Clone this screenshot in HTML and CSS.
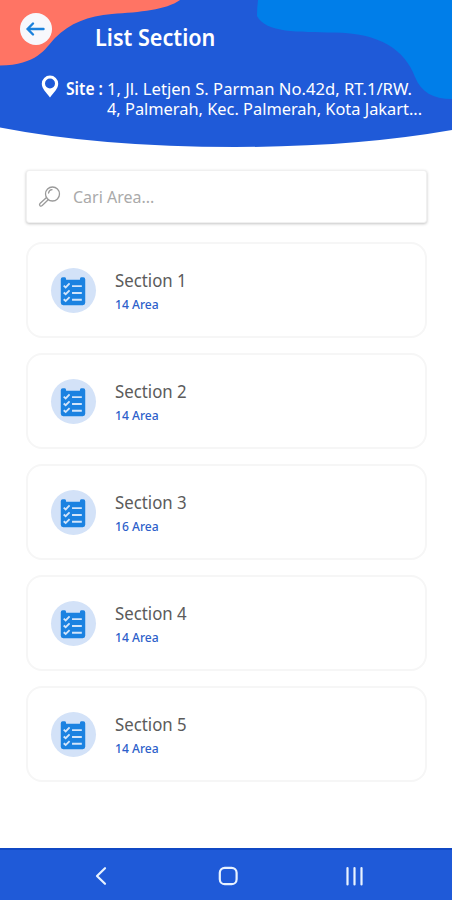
FILE: index.html
```html
<!DOCTYPE html>
<html lang="id">
<head>
<meta charset="utf-8">
<title>List Section</title>
<link rel="stylesheet" href="styles.css">
</head>
<body>
<svg class="defs" aria-hidden="true">
  <symbol id="checklist" viewBox="0 0 46 46">
    <path fill="#1b82e1" d="M10 11.500q0-2 2-2h2q1.500 0 1.500 2.500h14q0-2.500 1.500-2.500h2q2 0 2 2V35.500q0 2.500-2.500 2.500h-20Q10 38 10 35.500z"/>
    <path class="ticks" d="M13 18l2 1.800 4-4M13 25l2 1.800 4-4M13 32l2 1.800 4-4"/>
    <path class="rows" d="M21.500 18.500h10M21.500 25.500h10M21.500 32.500h10"/>
  </symbol>
</svg>
<div class="screen">
  <header class="header">
    <svg class="header-art" viewBox="0 0 452 150" aria-hidden="true">
      <path fill="#1f5ad8" d="M0 0H452V130Q355 147 235 147Q100 147 0 127.500z"/>
      <path fill="#ff7464" d="M0 0H180C166 10 140 12 112 14C88 16 70 23 55 38C45 49 37 65 0 65.500z"/>
      <path fill="#007ee9" d="M258 0H452V99C433 99 421 92 415 77C405 50 380 33 334 32.500C298 32 266 33 257 16Q257 8 258 0z"/>
    </svg>
    <div class="title-row">
      <button class="back" aria-label="Kembali">
        <svg width="32" height="32" viewBox="0 0 32 32"><path d="M23.500 16H7.500M13 10.500L7.500 16l5.500 5.500"/></svg>
      </button>
      <h1 class="title">List Section</h1>
    </div>
    <div class="site">
      <svg class="pin" width="18" height="24" viewBox="0 0 18 24"><path fill="#fff" fill-rule="evenodd" d="M9 .5A8.200 8.200 0 0 0 .8 8.700C.8 13.500 5 17 9 22.500C13 17 17.200 13.500 17.200 8.700A8.200 8.200 0 0 0 9 .5zM9 3.500A5 5 0 1 1 9 13.500A5 5 0 0 1 9 3.500z"/></svg>
      <span class="site-label">Site :</span>
      <p class="address"><span class="line-one">1, Jl. Letjen S. Parman No.42d, RT.1/RW.</span><span class="line-two">4, Palmerah, Kec. Palmerah, Kota Jakart...</span></p>
    </div>
  </header>
  <main class="content">
    <div class="search">
      <svg width="24" height="24" viewBox="0 0 24 24"><circle cx="14.500" cy="9" r="7"/><path d="M8.500 12.500l-6.500 6q-1 1.300 0 2.200 1 .8 2.200-.2l6.300-6M10.500 8q.8-3 3.500-3.300"/></svg>
      <span class="placeholder">Cari Area...</span>
    </div>
    <div class="card"><svg class="badge"><use href="#checklist"/></svg><div><h2>Section 1</h2><p>14 Area</p></div></div>
    <div class="card"><svg class="badge"><use href="#checklist"/></svg><div><h2>Section 2</h2><p>14 Area</p></div></div>
    <div class="card"><svg class="badge"><use href="#checklist"/></svg><div><h2>Section 3</h2><p>16 Area</p></div></div>
    <div class="card"><svg class="badge"><use href="#checklist"/></svg><div><h2>Section 4</h2><p>14 Area</p></div></div>
    <div class="card"><svg class="badge"><use href="#checklist"/></svg><div><h2>Section 5</h2><p>14 Area</p></div></div>
  </main>
  <nav class="navbar">
    <svg width="24" height="24" viewBox="0 0 24 24"><path d="M16 4.200L8 12l8 7.800"/></svg>
    <svg width="24" height="24" viewBox="0 0 24 24"><rect x="3.800" y="3.800" width="16.800" height="16.400" rx="5"/></svg>
    <svg width="24" height="24" viewBox="0 0 24 24"><path d="M4.500 4v16.500M11.500 4v16.500M18.500 4v16.500"/></svg>
  </nav>
</div>
</body>
</html>
```
FILE: styles.css
```css
* { box-sizing: border-box; }
body { margin: 0; background: #fff; font-family: "Noto Sans", sans-serif; }
h1, h2, p { margin: 0; font-weight: 400; }
.defs { display: block; width: 0; height: 0; }
.screen { width: 452px; height: 900px; display: flex; flex-direction: column; overflow: hidden; }
.header { position: relative; height: 150px; padding-top: 13px; color: #fff; }
.header-art { position: absolute; inset: 0; width: 452px; height: 150px; }
.title-row { position: relative; display: flex; height: 48px; padding-left: 20px; }
.back { width: 32px; height: 32px; padding: 0; border: 0; border-radius: 50%; background: #f7f8fc; }
.back svg { display: block; fill: none; stroke: #1b82dc; stroke-width: 2.400; stroke-linecap: round; stroke-linejoin: round; }
.title { margin-left: 43px; font-size: 23.500px; line-height: 49px; font-weight: 600; white-space: nowrap; transform: scaleX(.92); transform-origin: left; }
.site { position: relative; display: flex; margin-top: 14px; padding-left: 41px; font-size: 17px; line-height: 20px; white-space: nowrap; }
.site-label { width: 41px; margin: 4px 0 0 7px; font-weight: 600; transform: scaleX(.92); transform-origin: left; }
.address { margin-top: 4px; font-size: 16.500px; }
.address span { display: block; width: max-content; transform-origin: left; }
.line-one { transform: scaleX(1.007); }
.line-two { transform: scaleX(.992); }
.content { flex: 1; padding: 20px 25px 0 26px; }
.search { display: flex; align-items: center; height: 53px; margin-bottom: 19px; padding-left: 11px; border: 1px solid #f0f0f0; border-radius: 3px; background: #fff; box-shadow: 0 1px 3px #c4c4c4; }
.search svg { fill: none; stroke: #9a9a9a; stroke-width: 1.300; stroke-linecap: round; }
.placeholder { margin-left: 11px; color: #aaa; font-size: 17px; transform: scaleX(.94); transform-origin: left; }
.card { display: flex; align-items: center; height: 96px; margin-bottom: 15px; padding-left: 23px; border: 2px solid #f6f6f6; border-radius: 16px; }
.badge { width: 45px; height: 45px; margin-right: 19px; border-radius: 50%; background: #d3e2f8; }
.ticks, .rows { fill: none; stroke: #d3e5fa; stroke-width: 1.900; }
.card h2 { margin-top: 1px; color: #5b5b5b; font-size: 17.500px; line-height: 24px; transform: scaleX(.96); transform-origin: left; }
.card p { margin-top: 2px; color: #2d5fca; font-size: 13px; line-height: 20px; font-weight: 500; transform: scaleX(.93); transform-origin: left; }
.navbar { display: flex; justify-content: space-between; align-items: center; height: 52px; padding: 2px 85px 0 89px; background: #1f5ad8; border-top: 2px solid #1048c4; }
.navbar svg { fill: none; stroke: #e8f2ff; stroke-width: 2.200; stroke-linecap: round; stroke-linejoin: round; }
```
